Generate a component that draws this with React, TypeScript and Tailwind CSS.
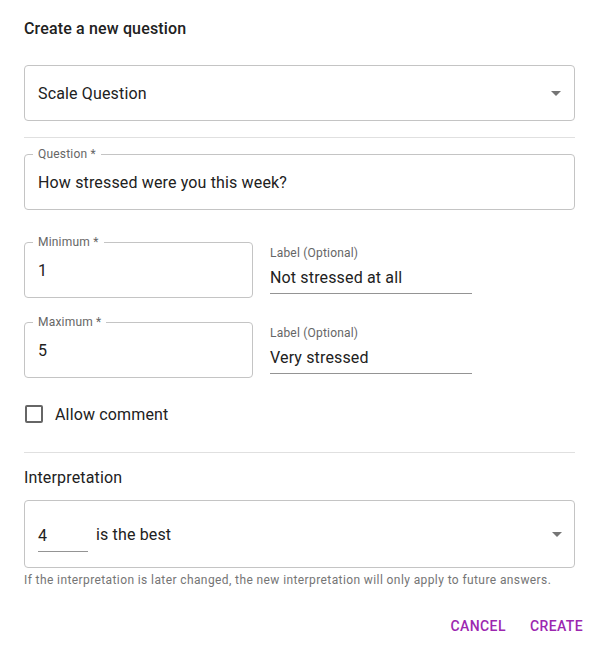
import { ReactNode } from "react";

const font = "font-['Roboto','Liberation_Sans',sans-serif]";

const DropArrow = () => (
  <svg width="10" height="5" viewBox="0 0 10 5" className="shrink-0">
    <path d="M0 0 L5 5 L10 0 Z" fill="#757575" />
  </svg>
);

const OutlinedField = ({
  label,
  value,
  className = "",
}: {
  label: string;
  value: string;
  className?: string;
}) => (
  <div
    className={`relative h-[56px] border border-[#c4c4c4] rounded flex items-center px-[13px] pt-[2px] ${className}`}
  >
    <span className="absolute left-[8px] -top-[8px] bg-white px-[5px] text-[12px] leading-[14px] tracking-[0.2px] text-[#666]">
      {label}
    </span>
    <span className="text-[16px] leading-6 tracking-[0.15px] text-[#212121]">{value}</span>
  </div>
);

const StandardField = ({ label, value }: { label: string; value: string }) => (
  <div className="w-[202px] ml-[17px] pt-[3px] flex flex-col">
    <span className="text-[12px] leading-4 tracking-[0.2px] text-[#666]">{label}</span>
    <span className="mt-[5px] text-[16px] leading-6 tracking-[0.15px] text-[#212121] pb-[3px] border-b border-[#949494]">
      {value}
    </span>
  </div>
);

const Row = ({ children, className = "" }: { children: ReactNode; className?: string }) => (
  <div className={`flex items-start ${className}`}>{children}</div>
);

const Divider = ({ className = "" }: { className?: string }) => (
  <div className={`h-px bg-[#e0e0e0] ${className}`} />
);

export default function App() {
  return (
    <div className={`w-[599px] h-[651px] bg-white ${font} text-[#212121]`}>
      <div className="px-6 pt-4">
        <h2 className="pt-px text-[16px] leading-6 font-medium tracking-[0.15px]">Create a new question</h2>

        <div className="mt-[24px] h-[56px] border border-[#c4c4c4] rounded flex items-center justify-between pl-[13px] pr-[13px]">
          <span className="pt-[2px] text-[16px] leading-6 tracking-[0.15px]">Scale Question</span>
          <DropArrow />
        </div>

        <Divider className="mt-4" />

        <OutlinedField className="mt-4" label="Question *" value="How stressed were you this week?" />

        <Row className="mt-8">
          <OutlinedField className="w-[229px]" label="Minimum *" value="1" />
          <StandardField label="Label (Optional)" value="Not stressed at all" />
        </Row>

        <Row className="mt-6">
          <OutlinedField className="w-[229px]" label="Maximum *" value="5" />
          <StandardField label="Label (Optional)" value="Very stressed" />
        </Row>

        <label className="mt-[15px] h-[42px] flex items-center">
          <span className="ml-[1px] w-[18px] h-[18px] border-2 border-[#666] rounded-[2px]" />
          <span className="ml-3 pt-[2px] text-[16px] leading-6 tracking-[0.15px]">Allow comment</span>
        </label>

        <Divider className="mt-[17px]" />

        <div className="mt-3 pt-px text-[16px] leading-6 tracking-[0.15px]">Interpretation</div>

        <div className="mt-[10px] h-[68px] border border-[#c4c4c4] rounded flex items-center justify-between pl-[13px] pr-[12px]">
          <div className="flex items-center">
            <span className="w-[50px] pt-[3px] pb-[3px] border-b border-[#949494] text-[16px] leading-6 mt-[4px]">
              4
            </span>
            <span className="ml-2 pt-[2px] text-[16px] leading-6 tracking-[0.15px]">is the best</span>
          </div>
          <DropArrow />
        </div>

        <p className="mt-[2px] text-[12px] leading-5 text-[#757575] tracking-[0.4px]">
          If the interpretation is later changed, the new interpretation will only apply to future answers.
        </p>
      </div>

      <div className="mt-[18px] flex justify-end gap-2 pr-2">
        <button className="h-9 px-2 text-[14px] font-medium uppercase tracking-[0.4px] text-[#9c27b0]">
          Cancel
        </button>
        <button className="h-9 px-2 text-[14px] font-medium uppercase tracking-[0.4px] text-[#9c27b0]">
          Create
        </button>
      </div>
    </div>
  );
}
